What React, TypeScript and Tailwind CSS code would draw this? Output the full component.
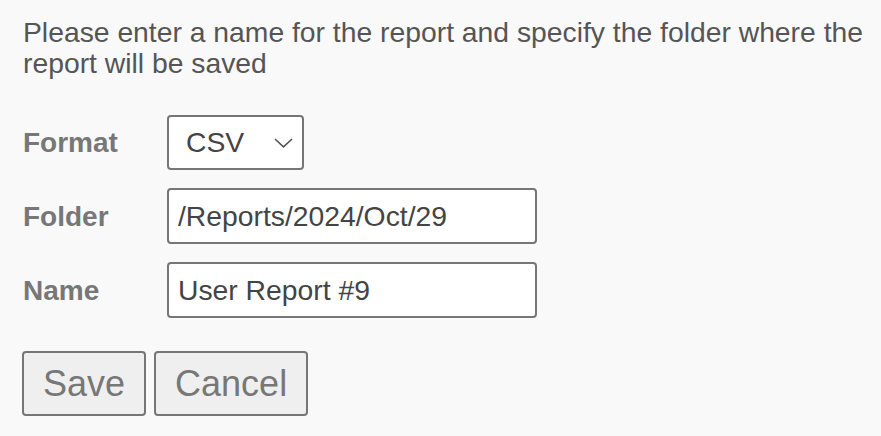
import React from "react";

export default function App() {
  return (
    <div className="min-h-screen bg-[#f9f9f9] pl-[23px] pr-[8px] pt-[17px] font-['Liberation_Sans',Arial,sans-serif]">
      <p className="text-[28.3px] leading-[31px] text-[#555]">
        Please enter a name for the report and specify the folder where the report will be saved
      </p>
      <div className="mt-[36px] flex flex-col gap-[18px]">
        <div className="flex items-center">
          <label className="w-[144px] text-[28px] leading-[31px] font-bold text-[#777]">Format</label>
          <div className="relative">
            <select
              defaultValue="CSV"
              className="appearance-none w-[137px] h-[55px] border-2 border-[#767676] rounded-[4px] bg-white pl-[17px] pr-[40px] text-[28.3px] leading-[31px] text-[#444] outline-none"
            >
              <option>CSV</option>
              <option>PDF</option>
              <option>XLSX</option>
            </select>
            <svg
              className="pointer-events-none absolute right-[11px] top-[23px]"
              width="19"
              height="10"
              viewBox="0 0 19 10"
              fill="none"
            >
              <path d="M1 1L9.5 8.8L18 1" stroke="#555" strokeWidth="1.6" />
            </svg>
          </div>
        </div>
        <div className="flex items-center">
          <label className="w-[144px] text-[28px] leading-[31px] font-bold text-[#777]">Folder</label>
          <input
            defaultValue="/Reports/2024/Oct/29"
            className="w-[370px] h-[56px] border-2 border-[#767676] rounded-[4px] bg-white px-[9px] text-[28.3px] leading-[31px] text-[#444] outline-none"
          />
        </div>
        <div className="flex items-center">
          <label className="w-[144px] text-[28px] leading-[31px] font-bold text-[#777]">Name</label>
          <input
            defaultValue="User Report #9"
            className="w-[370px] h-[56px] border-2 border-[#767676] rounded-[4px] bg-white px-[9px] text-[28.3px] leading-[31px] text-[#444] outline-none"
          />
        </div>
      </div>
      <div className="-ml-px mt-[33px] flex gap-[8px]">
        <button className="border-2 border-[#767676] rounded-[4px] bg-[#efefef] px-[19px] py-[10px] text-[36px] leading-[41px] text-[#777]">
          Save
        </button>
        <button className="border-2 border-[#767676] rounded-[4px] bg-[#efefef] px-[19px] py-[10px] text-[36px] leading-[41px] text-[#777]">
          Cancel
        </button>
      </div>
    </div>
  );
}
